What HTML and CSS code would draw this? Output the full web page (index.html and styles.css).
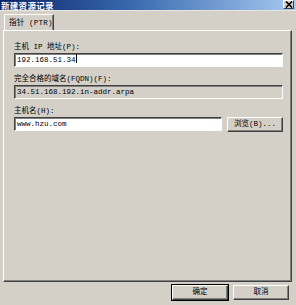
FILE: index.html
```html
<!DOCTYPE html>
<html lang="zh-CN">
<head>
   <meta charset="UTF-8">
   <title>新建资源记录</title>
   <link rel="stylesheet" href="styles.css">
</head>
<body>
   <div class="titlebar">
      <span class="title">新建资源记录</span>
      <span class="close">
         <svg width="8" height="7" viewBox="0 0 8 7"><path d="M1 0.5 L7 6.5 M7 0.5 L1 6.5" stroke="#000" stroke-width="1.6"/></svg>
      </span>
   </div>

   <div class="tabs">
      <div class="tab">指针 (PTR)</div>
   </div>

   <div class="panel">
      <div class="field">
         <label>主机 IP 地址(P):</label>
         <div class="input">192.168.51.34<span class="caret"></span></div>
      </div>

      <div class="field">
         <label>完全合格的域名(FQDN)(F):</label>
         <div class="input readonly">34.51.168.192.in-addr.arpa</div>
      </div>

      <div class="field">
         <label>主机名(H):</label>
         <div class="row">
            <div class="input grow">www.hzu.com</div>
            <button class="btn">浏览(B)...</button>
         </div>
      </div>
   </div>

   <div class="buttons">
      <button class="btn default">确定</button>
      <button class="btn">取消</button>
   </div>
</body>
</html>
```

FILE: styles.css
```css
* {
   box-sizing: border-box;
   font-family: 'Liberation Mono', 'Noto Sans CJK SC', monospace;
   font-size: 7.5px;
}

html,
body {
   margin: 0;
   padding: 0;
   width: 296px;
   height: 305px;
   overflow: hidden;
   background: #d4d0c8;
   color: #000;
}

.titlebar {
   height: 11px;
   display: flex;
   justify-content: space-between;
   align-items: center;
   background: linear-gradient(to right, #0a246a, #3a6ab0 45%, #a6caf0);
   border-bottom: 1px solid #e8e6e0;
}

.title {
   color: #fff;
   font-family: 'Noto Sans CJK SC', sans-serif;
   font-weight: bold;
   font-size: 8.5px;
   line-height: 10px;
   margin-left: 1px;
   letter-spacing: 0.3px;
}

.close {
   width: 11px;
   height: 9px;
   margin-right: 2px;
   align-self: flex-start;
   background: #d4d0c8;
   border: 1px solid;
   border-color: #fff #404040 #404040 #fff;
   display: flex;
   align-items: center;
   justify-content: center;
}

.close svg {
   display: block;
}

.tabs {
   display: flex;
   padding: 3px 0 0 4px;
}

.tab {
   width: 50px;
   height: 16px;
   padding: 4px 0 0 4px;
   border: 1px solid;
   border-color: #fff #404040 transparent #fff;
   border-bottom: none;
   box-shadow: inset -1px 0 0 #808080;
   line-height: 9px;
   letter-spacing: 0.2px;
}

.panel {
   margin: 0 4px 0 3px;
   height: 252px;
   padding: 10px 8px 0 10px;
   border: 1px solid;
   border-color: #fff #404040 #404040 #fff;
   box-shadow: inset -1px -1px 0 #808080;
   display: flex;
   flex-direction: column;
   gap: 6px;
}

.field label {
   display: block;
   line-height: 12px;
}

.input {
   height: 14px;
   line-height: 12px;
   padding-left: 2px;
   background: #fff;
   border: 1px solid;
   border-color: #404040 #fff #fff #404040;
   box-shadow: inset 1px 1px 0 #808080;
   white-space: nowrap;
}

.readonly {
   background: #d4d0c8;
}

.caret {
   display: inline-block;
   width: 1px;
   height: 9px;
   background: #000;
   vertical-align: -1px;
}

.row {
   display: flex;
   gap: 5px;
}

.grow {
   flex: 1;
}

.btn {
   width: 56px;
   height: 15px;
   padding: 0;
   background: #d4d0c8;
   border: 1px solid;
   border-color: #fff #404040 #404040 #fff;
   box-shadow: inset -1px -1px 0 #808080;
   line-height: 11px;
   text-align: center;
   color: #000;
}

.buttons {
   display: flex;
   justify-content: flex-end;
   gap: 5px;
   padding: 3px 7px 0 0;
}

.default {
   outline: 1px solid #000;
   outline-offset: 0;
}
```
